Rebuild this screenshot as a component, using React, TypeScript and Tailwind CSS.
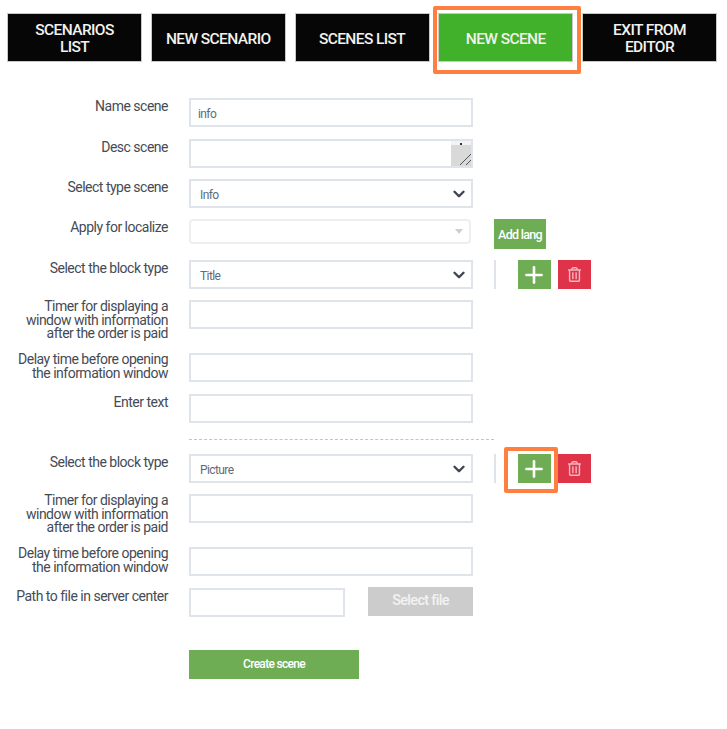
import React from 'react'
import { ChevronDown, Plus } from 'lucide-react'
import { FaRegTrashAlt } from 'react-icons/fa'

const NavButton = ({ lines, active }: { lines: string[]; active?: boolean }) => (
  <div className={`w-[135px] h-[49px] pt-[3px] flex flex-col items-center justify-center text-[15.5px] leading-[17px] font-medium tracking-[-0.6px] text-[#f2f2ee] border border-[#c9c9c9] ${active ? 'bg-[#41b02a] border-[#41b02a]' : 'bg-[#060606]'}`}>
    {lines.map((l) => <span key={l}>{l}</span>)}
  </div>
)

const Row = ({ label, className, labelPad = 'pt-[2px]', children }: { label: string[]; className: string; labelPad?: string; children: React.ReactNode }) => (
  <div className={`flex items-start ${className}`}>
    <div className={`w-[168px] h-[29px] ${labelPad} text-right text-[14px] leading-[13.5px] tracking-[-0.5px] text-[#454b55] shrink-0`}>
      {label.map((l) => <div key={l}>{l}</div>)}
    </div>
    <div className="ml-[21px] flex items-start">{children}</div>
  </div>
)

const boxClass = 'border-2 border-[#dfe3ea] bg-white w-[284px] h-[29px] text-[12px] tracking-[-0.6px] text-[#5c6b7a]'

const Input = ({ value }: { value?: string }) => (
  <input readOnly value={value ?? ''} className={`${boxClass} block pl-[7px] pt-[2px] outline-none`} />
)

const Select = ({ value }: { value: string }) => (
  <div className={`${boxClass} flex items-center justify-between pl-[9px] pr-[3px]`}>
    <span className="mt-[2px]">{value}</span>
    <ChevronDown size={18} strokeWidth={3.2} className="text-[#3f4650]" />
  </div>
)

const BlockActions = ({ highlight }: { highlight?: boolean }) => (
  <div className="flex items-start">
    <div className="ml-[21px] w-[2px] h-[29px] bg-[#dfe3ea]" />
    <div className="relative ml-[22px]">
      <div className="w-[33px] h-[29px] pr-[1px] flex items-center justify-center bg-[#6fad54] text-white">
        <Plus size={26} strokeWidth={2.4} />
      </div>
      {highlight && <div className="absolute -left-[14px] -right-[7px] -top-[7px] -bottom-[10px] border-[4px] border-[#ff7f41] rounded-[2px]" />}
    </div>
    <div className="ml-[7px] w-[33px] h-[29px] flex items-center justify-center bg-[#df3349] text-[#f7b5bf]">
      <FaRegTrashAlt size={15} />
    </div>
  </div>
)

const timerLabel = ['Timer for displaying a', 'window with information', 'after the order is paid']
const delayLabel = ['Delay time before opening', 'the information window']

export default function App() {
  return (
    <div className="w-[727px] h-[729px] bg-white font-['Roboto',sans-serif] overflow-hidden">
      <nav className="flex gap-[8.75px] pt-[13px] pl-[7px]">
        <NavButton lines={['SCENARIOS', 'LIST']} />
        <NavButton lines={['NEW SCENARIO']} />
        <NavButton lines={['SCENES LIST']} />
        <div className="relative">
          <NavButton lines={['NEW SCENE']} active />
          <div className="absolute -left-[5px] -right-[8px] -top-[7px] -bottom-[12px] border-[4px] border-[#ff7f41] rounded-[2px]" />
        </div>
        <NavButton lines={['EXIT FROM', 'EDITOR']} />
      </nav>

      <form>
        <Row label={['Name scene']} className="mt-[36px]">
          <Input value="info" />
        </Row>
        <Row label={['Desc scene']} className="mt-[12px]">
          <div className={`${boxClass} relative`}>
            <div className="absolute right-0 top-0 bottom-0 w-[20px] bg-[#d9d9d9]">
              <div className="h-[4px] bg-[#f3f3f3] flex justify-center">
                <div className="mt-[2px] w-[2px] h-[2px] bg-[#333]" />
              </div>
              <svg viewBox="0 0 20 21" className="w-[20px] h-[21px]">
                <path d="M9 20 L20 9 M15 20 L20 15" stroke="#555" strokeWidth="1" fill="none" />
              </svg>
            </div>
          </div>
        </Row>
        <Row label={['Select type scene']} className="mt-[11px]">
          <Select value="Info" />
        </Row>
        <Row label={['Apply for localize']} className="mt-[11px]">
          <div className="w-[282px] h-[25px] border-2 border-[#eceef2] rounded-[4px] flex items-center justify-end pr-[6px]">
            <svg viewBox="0 0 8 5" className="w-[8px] h-[5px]"><path d="M0 0 H8 L4 5 Z" fill="#cfcfcf" /></svg>
          </div>
          <button type="button" className="ml-[23px] w-[52px] h-[30px] pt-[2px] bg-[#6fad54] text-white text-[12.5px] font-medium tracking-[-0.7px]">Add lang</button>
        </Row>
        <Row label={['Select the block type']} className="mt-[11px]">
          <Select value="Title" />
          <BlockActions />
        </Row>
        <Row label={timerLabel} labelPad="pt-0" className="mt-[11px]">
          <Input />
        </Row>
        <Row label={delayLabel} labelPad="pt-0" className="mt-[24px]">
          <Input />
        </Row>
        <Row label={['Enter text']} className="mt-[12px]">
          <Input />
        </Row>

        <div className="ml-[189px] w-[305px] mt-[16px] border-t border-dashed border-[#c4c4c4]" />

        <Row label={['Select the block type']} className="mt-[14px]">
          <Select value="Picture" />
          <BlockActions highlight />
        </Row>
        <Row label={timerLabel} labelPad="pt-0" className="mt-[11px]">
          <Input />
        </Row>
        <Row label={delayLabel} labelPad="pt-0" className="mt-[24px]">
          <Input />
        </Row>
        <Row label={['Path to file in server center']} className="mt-[12px]">
          <input readOnly className="block w-[156px] h-[29px] border-2 border-[#dfe3ea] outline-none" />
          <button type="button" className="ml-[23px] -mt-[1px] w-[105px] h-[29px] pb-[2px] bg-[#cccccc] text-[#f2f2f2] text-[14.5px] font-medium tracking-[-0.7px]">Select file</button>
        </Row>
        <button type="button" className="block ml-[189px] mt-[33px] w-[170px] h-[29px] pb-[2px] bg-[#6fad54] text-white text-[12px] font-medium tracking-[-0.7px]">Create scene</button>
      </form>
    </div>
  )
}
